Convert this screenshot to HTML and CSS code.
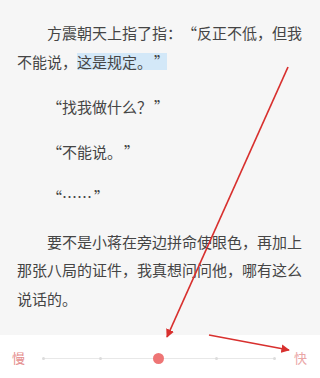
FILE: index.html
```
<!DOCTYPE html>
<html lang="zh-CN">
<head>
<meta charset="utf-8">
<link rel="stylesheet" href="styles.css">
</head>
<body>
<div class="page">
  <div class="content">
    <p class="para">方震朝天上指了指：<span class="q qo">“</span>反正不低，但我不能说，<span class="hl">这是规定。<span class="q qc">”</span></span></p>
    <p class="para"><span class="q qo">“</span>找我做什么？<span class="q qc">”</span></p>
    <p class="para"><span class="q qo">“</span>不能说。<span class="q qc">”</span></p>
    <p class="para"><span class="q qo">“</span><span class="ell">……</span><span class="q qc">”</span></p>
    <p class="para">要不是小蒋在旁边拼命使眼色，再加上那张八局的证件，我真想问问他，哪有这么说话的。</p>
  </div>
  <div class="bar">
    <span class="label slow">慢</span>
    <div class="track">
      <span class="stop"><span class="dot"></span></span>
      <span class="stop"><span class="dot"></span></span>
      <span class="stop"><span class="thumb"></span></span>
      <span class="stop"><span class="dot"></span></span>
      <span class="stop"><span class="dot"></span></span>
    </div>
    <span class="label fast">快</span>
  </div>
  <svg class="arrows" width="320" height="378" viewBox="0 0 320 378">
    <defs>
      <marker id="head" viewBox="0 0 10 10" refX="9" refY="5" markerWidth="5" markerHeight="5" orient="auto-start-reverse" markerUnits="strokeWidth">
        <path d="M0 0 L10 5 L0 10 Z" fill="#d8302e"/>
      </marker>
    </defs>
    <line x1="288" y1="67" x2="167" y2="337" stroke="#d8302e" stroke-width="1.7" marker-end="url(#head)"/>
    <line x1="209" y1="335" x2="289" y2="350" stroke="#d8302e" stroke-width="1.7" marker-end="url(#head)"/>
  </svg>
</div>
</body>
</html>
```
FILE: styles.css
```
html, body {
  margin: 0;
  padding: 0;
}
body {
  width: 320px;
  height: 378px;
  overflow: hidden;
  background: #f6f6f6;
  font-family: "Noto Sans CJK SC", "Noto Sans", sans-serif;
}
.page {
  position: relative;
  width: 320px;
  height: 378px;
  display: flex;
  flex-direction: column;
}
.content {
  flex: 1;
  padding: 19px 15px 0 17px;
  color: #454545;
  font-size: 15px;
  line-height: 28.5px;
  text-spacing-trim: space-all;
}
.para {
  margin: 0 0 16.5px 0;
  text-indent: 30px;
}
.q {
  display: inline-block;
  width: 15px;
  text-indent: 0;
}
.qo {
  text-align: right;
  padding-right: 1px;
  box-sizing: border-box;
}
.qc {
  text-align: left;
  padding-left: 2px;
  box-sizing: border-box;
}
.ell {
  display: inline-block;
  width: 30px;
  letter-spacing: 0;
  text-align: center;
  text-indent: 0;
}
.hl {
  display: inline-block;
  background: #d3e8f8;
  line-height: 17px;
  text-indent: 0;
}
.bar {
  height: 43px;
  box-sizing: border-box;
  padding: 3px 13px 0 12px;
  background: #ffffff;
  display: flex;
  align-items: center;
}
.label {
  font-size: 13px;
  line-height: 16px;
  width: 13px;
}
.slow {
  color: #e48c8c;
}
.fast {
  color: #eaa6a6;
}
.track {
  margin: 0 14px 0 12px;
  width: 244px;
  height: 12px;
  display: flex;
  justify-content: space-between;
  background: linear-gradient(#e8e8e8, #e8e8e8) center / calc(100% - 12px) 1px no-repeat;
}
.stop {
  width: 12px;
  height: 12px;
  display: flex;
  align-items: center;
  justify-content: center;
}
.dot {
  width: 3px;
  height: 3px;
  border-radius: 50%;
  background: #dcdcdc;
}
.thumb {
  width: 11px;
  height: 11px;
  border-radius: 50%;
  background: #ee7575;
}
.arrows {
  position: absolute;
  left: 0;
  top: 0;
  pointer-events: none;
}
```
